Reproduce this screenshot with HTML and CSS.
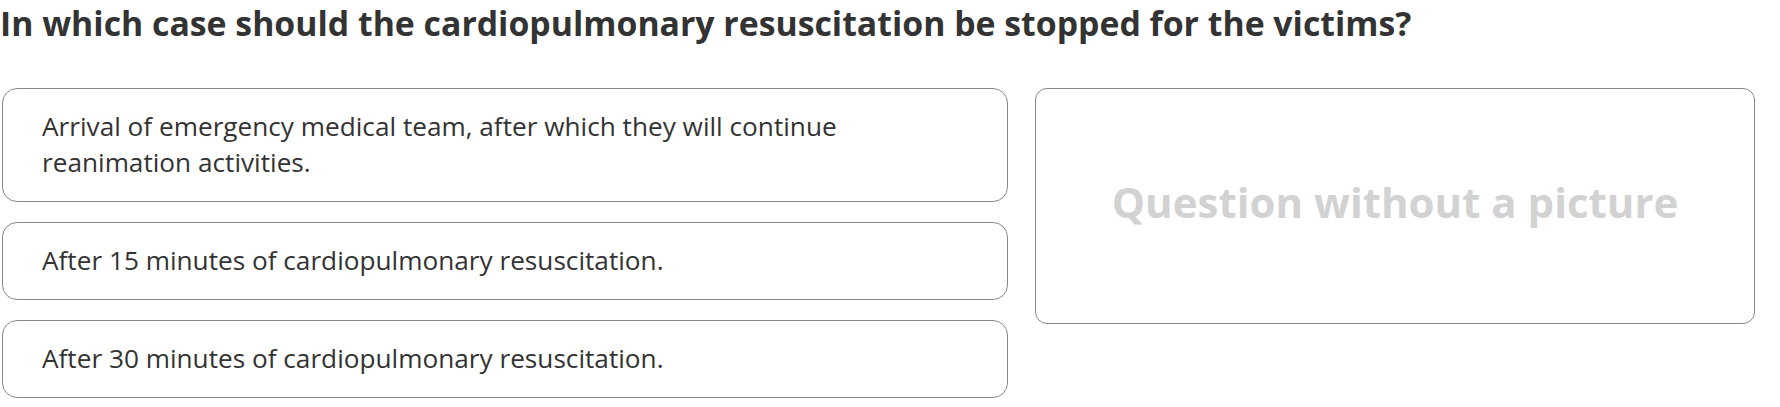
FILE: index.html
```html
<!DOCTYPE html>
<html lang="en">
<head>
<meta charset="utf-8">
<title>Question</title>
<link rel="stylesheet" href="styles.css">
</head>
<body>
<div class="page">
  <h1 class="question">In which case should the cardiopulmonary resuscitation be stopped for the victims?</h1>
  <div class="layout">
    <div class="answers">
      <div class="answer">Arrival of emergency medical team, after which they will continue reanimation activities.</div>
      <div class="answer">After 15 minutes of cardiopulmonary resuscitation.</div>
      <div class="answer">After 30 minutes of cardiopulmonary resuscitation.</div>
    </div>
    <div class="picture">
      <span class="picture-text">Question without a picture</span>
    </div>
  </div>
</div>
</body>
</html>
```

FILE: styles.css
```css
html, body {
  margin: 0;
  padding: 0;
  background: #ffffff;
}

.page {
  font-family: "Open Sans", "Liberation Sans", sans-serif;
  color: #333333;
  padding: 0 0 0 2px;
}

.question {
  margin: 0;
  padding: 0;
  font-size: 33.8px;
  font-weight: 700;
  line-height: 46px;
  color: #333333;
  margin-left: -2px;
}

.layout {
  display: grid;
  grid-template-columns: 1006px 720px;
  column-gap: 27px;
  margin-top: 42px;
  align-items: start;
}

.answers {
  display: flex;
  flex-direction: column;
  gap: 20px;
}

.answer {
  border: 1px solid #888888;
  border-radius: 15px;
  padding: 19px 100px 21px 39px;
  font-size: 26.2px;
  line-height: 36px;
  color: #333333;
}

.picture {
  border: 1px solid #888888;
  border-radius: 12px;
  height: 234px;
  box-sizing: content-box;
  display: flex;
  align-items: center;
  justify-content: center;
  padding-bottom: 0;
}

.picture-text {
  font-size: 42px;
  font-weight: 700;
  color: #d2d2d2;
  margin-bottom: 9px;
}
```
